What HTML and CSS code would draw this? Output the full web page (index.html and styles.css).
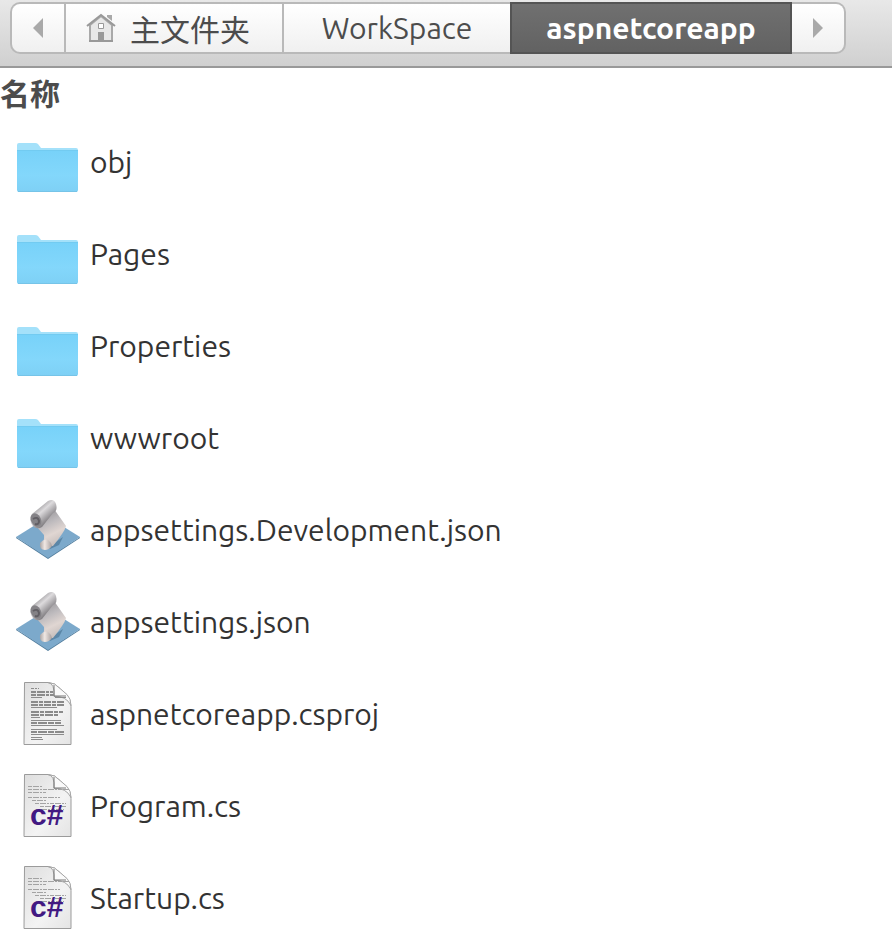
FILE: index.html
```html
<!DOCTYPE html>
<html lang="zh-CN">
<head>
    <meta charset="UTF-8">
    <title>aspnetcoreapp</title>
    <link rel="stylesheet" href="styles.css">
</head>
<body>
    <!-- shared icons -->
    <svg class="icon-defs" width="0" height="0" aria-hidden="true">
        <defs>
            <linearGradient id="folderFill" x1="0" y1="0" x2="0" y2="1">
                <stop offset="0" stop-color="#78d2f9"/>
                <stop offset="0.6" stop-color="#83d7fb"/>
                <stop offset="1" stop-color="#7ed0f5"/>
            </linearGradient>
            <linearGradient id="scrollFill" x1="0.2" y1="0" x2="0.6" y2="1">
                <stop offset="0" stop-color="#8f8d90"/>
                <stop offset="0.4" stop-color="#bdbabd"/>
                <stop offset="0.7" stop-color="#e0d6d2"/>
                <stop offset="1" stop-color="#c5bdbb"/>
            </linearGradient>
            <linearGradient id="rollFill" x1="0.2" y1="0.2" x2="0.7" y2="0.8">
                <stop offset="0" stop-color="#8c8a8d"/>
                <stop offset="0.4" stop-color="#dddbdd"/>
                <stop offset="1" stop-color="#757276"/>
            </linearGradient>
            <linearGradient id="curlFill" x1="0" y1="0" x2="1" y2="0">
                <stop offset="0" stop-color="#a9a4a4"/>
                <stop offset="0.4" stop-color="#f0e7e3"/>
                <stop offset="1" stop-color="#a79f9e"/>
            </linearGradient>
            <linearGradient id="paperFill" x1="0" y1="0" x2="1" y2="1">
                <stop offset="0" stop-color="#dedede"/>
                <stop offset="0.6" stop-color="#f3f3f3"/>
                <stop offset="1" stop-color="#e4e4e4"/>
            </linearGradient>
        </defs>
        <symbol id="folder" viewBox="0 0 64 64">
            <path fill="#a4e1fa" d="M1 24V15q0-2 2-2h16q2 0 3 1l3 4h35q2 0 2 2v4z"/>
            <path fill="url(#folderFill)" d="M1 21h61v39q0 2-2 2H3q-2 0-2-2z"/>
            <path stroke="#72cbf1" d="M1 20.5h61"/>
            <path stroke="#76c4e8" d="M2 61.5h59"/>
        </symbol>
        <symbol id="script" viewBox="0 -2 64 64">
            <path fill="#547f9f" d="M0 38l32 21 32-21v-1L32 57 0 37z"/>
            <path fill="#7ca9cb" d="M0 37l32-20 32 20-32 21z"/>
            <path fill="#466f90" opacity="0.6" d="M32 47l15-10-4 8-9 4z"/>
            <path fill="url(#scrollFill)" d="M20 26L38 9l12 17q-1 4-4 8-4 6-9 12H24q5-4 4-11z"/>
            <path fill="url(#rollFill)" d="M16 14L32 1q6-3 8 3 2 7-3 9L26 27q-5 3-9-1-5-6-1-12z"/>
            <ellipse cx="20" cy="20" rx="5" ry="7" fill="#848286" transform="rotate(-25 20 20)"/>
            <path fill="none" stroke="#625f64" stroke-width="2" d="M17 19q5-3 6 2 0 4-4 3"/>
            <path fill="url(#curlFill)" d="M24 43q4-5 8-3 3 2 4 6-3 4-7 4-6 0-5-7z"/>
        </symbol>
        <symbol id="paper" viewBox="0 0 64 64">
            <path fill="url(#paperFill)" stroke="#9b9b9b" d="M8.5.5H32q7 0 12 6l7 7q4 4 4 11v38h-47z"/>
            <path fill="#fafafa" stroke="#a5a5a5" d="M32 .5q7 1 6 14 12-1 17 9 0-7-4-11l-7-6q-5-6-12-6z"/>
            <path fill="none" stroke="#777" d="M38 3v11h12"/>
        </symbol>
        <symbol id="textfile" viewBox="0 0 64 64">
            <use href="#paper"/>
            <g fill="none" stroke="#8b8b8b">
                <path stroke-dasharray="3 1 2 1" d="M15 6.5h8"/>
                <path stroke-width="2" stroke-dasharray="5 1 8 1 3 1" d="M15 10h22M15 13h23"/>
                <path d="M15 15.5h11M39 15.5h11"/>
                <path stroke-width="2" stroke-dasharray="7 1 4 1" d="M15 20h33M15 23h33"/>
                <path d="M15 25.5h26"/>
                <path stroke-width="2" stroke-dasharray="8 1 4 1" d="M15 30h32M15 33h27"/>
                <path d="M15 35.5h9M15 38.5h30"/>
                <path stroke-width="2" stroke-dasharray="6 1 9 1" d="M15 41h30M15 50h33"/>
                <path d="M15 43.5h33M15 47.5h26M15 52.5h33M15 55.5h11M15 57.5h12"/>
            </g>
        </symbol>
        <symbol id="codefile" viewBox="0 0 64 64">
            <use href="#paper"/>
            <g fill="none" stroke="#a3a3a3" stroke-dasharray="4 1 6 1 2 1">
                <path d="M12 12.5h14M12 15.5h41M12 18.5h18M12 23.5h32M16 26.5h15M19 29.5h31M24 32.5h26M20 35.5h28"/>
            </g>
        </symbol>
    </svg>

    <nav class="toolbar" aria-label="路径">
        <div class="pathbar">
            <button class="path-item arrow" type="button" aria-label="后退">
                <svg width="12" height="20" viewBox="0 0 12 20"><path fill="#a9a9a9" d="M11 0v20L1 10z"/></svg>
            </button>
            <button class="path-item home" type="button">
                <svg width="30" height="30" viewBox="0 0 30 30">
                    <path fill="#a9a9a9" d="M21 2h5v6l-5-4z"/>
                    <path fill="#e8e8e8" stroke="#a9a9a9" stroke-width="2" d="M4 12L15 3l11 9v16H4z"/>
                    <path fill="none" stroke="#999" stroke-width="2" d="M1 13L15 2l14 11"/>
                    <path fill="#fff" stroke="#999" d="M12.5 10.5h5v5h-5z"/>
                    <path fill="#999" d="M12 19h6v9h-6z"/>
                    <path stroke="#999" stroke-width="2" d="M3 28h24"/>
                </svg>
                <span>主文件夹</span>
            </button>
            <button class="path-item workspace" type="button">WorkSpace</button>
            <button class="path-item current" type="button" aria-current="page">aspnetcoreapp</button>
            <button class="path-item arrow" type="button" aria-label="前进">
                <svg width="12" height="20" viewBox="0 0 12 20"><path fill="#a9a9a9" d="M1 0v20l10-10z"/></svg>
            </button>
        </div>
    </nav>

    <table class="files">
        <thead>
            <tr><th scope="col">名称</th></tr>
        </thead>
        <tbody>
            <tr><td><a class="file" href="#"><svg class="file-icon"><use href="#folder"/></svg>obj</a></td></tr>
            <tr><td><a class="file" href="#"><svg class="file-icon"><use href="#folder"/></svg>Pages</a></td></tr>
            <tr><td><a class="file" href="#"><svg class="file-icon"><use href="#folder"/></svg>Properties</a></td></tr>
            <tr><td><a class="file" href="#"><svg class="file-icon"><use href="#folder"/></svg>wwwroot</a></td></tr>
            <tr><td><a class="file" href="#"><svg class="file-icon"><use href="#script"/></svg>appsettings.Development.json</a></td></tr>
            <tr><td><a class="file" href="#"><svg class="file-icon"><use href="#script"/></svg>appsettings.json</a></td></tr>
            <tr><td><a class="file" href="#"><svg class="file-icon"><use href="#textfile"/></svg>aspnetcoreapp.csproj</a></td></tr>
            <tr><td><a class="file" href="#"><svg class="file-icon"><use href="#codefile"/><text class="csharp-label" x="14" y="51">c#</text></svg>Program.cs</a></td></tr>
            <tr><td><a class="file" href="#"><svg class="file-icon"><use href="#codefile"/><text class="csharp-label" x="14" y="51">c#</text></svg>Startup.cs</a></td></tr>
        </tbody>
    </table>
</body>
</html>
```

FILE: styles.css
```css
body {
    margin: 0;
    background-color: #fff;
    color: #333;
    font-family: Ubuntu, "Noto Sans", "Noto Sans CJK SC", sans-serif;
    font-size: 30px;
}

.icon-defs {
    position: absolute;
}

.toolbar {
    padding: 2px 10px 12px;
    border-bottom: 2px solid #999;
    background: linear-gradient(#e8e8e8, #d0d0d0);
}

.pathbar {
    display: flex;
    width: fit-content;
}

.path-item {
    display: flex;
    align-items: center;
    justify-content: center;
    box-sizing: border-box;
    height: 52px;
    padding: 0;
    border: 2px solid #b9b9b9;
    border-right-width: 0;
    background: linear-gradient(#fff, #f0f0f0);
    color: #4c4c4c;
    font-family: inherit;
    font-size: 30px;
    cursor: pointer;
}

.arrow {
    width: 54px;
}

.arrow:first-child {
    border-radius: 10px 0 0 10px;
}

.arrow:last-child {
    border-left-width: 0;
    border-right-width: 2px;
    border-radius: 0 10px 10px 0;
}

.home {
    gap: 14px;
    min-width: 218px;
    padding-right: 12px;
}

.workspace {
    min-width: 228px;
}

.current {
    min-width: 282px;
    border: 2px solid #545454;
    background: linear-gradient(#707070, #626262);
    color: #fff;
    font-weight: bold;
}

.files {
    width: 100%;
    border-collapse: collapse;
}

.files th {
    height: 48px;
    padding: 0;
    color: #4c4c4c;
    font-family: "Noto Sans CJK SC", sans-serif;
    line-height: 48px;
    text-align: left;
}

.files td {
    padding: 0;
}

.file {
    display: flex;
    align-items: center;
    gap: 10px;
    height: 92px;
    padding-left: 16px;
    color: #333;
    text-decoration: none;
}

.file-icon {
    flex: none;
    width: 64px;
    height: 64px;
}

.csharp-label {
    fill: #421982;
    font-family: "Liberation Sans", sans-serif;
    font-size: 30px;
    font-weight: bold;
}
```
